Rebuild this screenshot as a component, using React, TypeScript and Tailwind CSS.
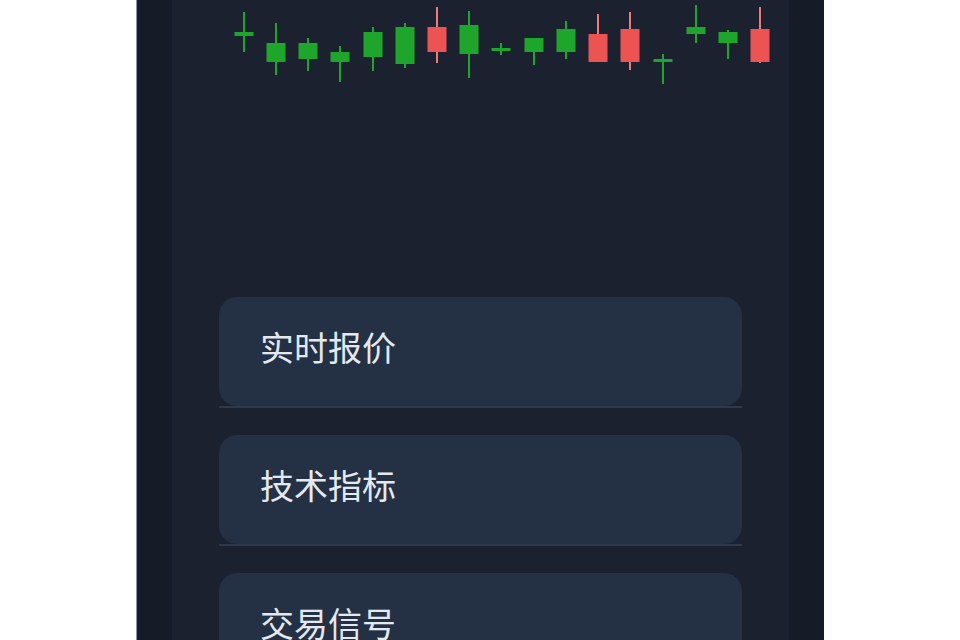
import React from 'react';

type Candle = {
  x: number; // wick x (page coords)
  hi: number;
  lo: number;
  top: number;
  bot: number;
  up: boolean;
};

const candles: Candle[] = [
  { x: 245, hi: 12, lo: 52, top: 32, bot: 36, up: true },
  { x: 277, hi: 23, lo: 75, top: 43, bot: 62, up: true },
  { x: 309, hi: 38, lo: 71, top: 43, bot: 59, up: true },
  { x: 341, hi: 46, lo: 82, top: 52, bot: 62, up: true },
  { x: 374, hi: 27, lo: 71, top: 32, bot: 57, up: true },
  { x: 406, hi: 23, lo: 68, top: 27, bot: 64, up: true },
  { x: 438, hi: 7, lo: 63, top: 27, bot: 52, up: false },
  { x: 470, hi: 11, lo: 78, top: 25, bot: 54, up: true },
  { x: 502, hi: 43, lo: 55, top: 48, bot: 51, up: true },
  { x: 535, hi: 38, lo: 65, top: 38, bot: 52, up: true },
  { x: 567, hi: 21, lo: 59, top: 29, bot: 52, up: true },
  { x: 599, hi: 14, lo: 62, top: 34, bot: 62, up: false },
  { x: 631, hi: 12, lo: 70, top: 29, bot: 62, up: false },
  { x: 664, hi: 54, lo: 84, top: 59, bot: 61, up: true },
  { x: 697, hi: 5, lo: 43, top: 27, bot: 34, up: true },
  { x: 729, hi: 30, lo: 59, top: 32, bot: 43, up: true },
  { x: 761, hi: 7, lo: 63, top: 29, bot: 62, up: false },
];

const items = ['实时报价', '技术指标', '交易信号'];

function CandleChart() {
  // svg spans the inner panel, which starts at x=173
  const ox = 173;
  return (
    <svg width="615" height="100" viewBox="0 0 615 100" className="block shrink-0 w-[615px] h-[100px] max-w-none">
      {candles.map((c, i) => {
        const col = c.up ? '#1ea52c' : '#ec5454';
        const wick = c.up ? '#1ea52c' : '#f07a7a';
        const h = Math.max(c.bot - c.top, 3);
        return (
          <g key={i}>
            <rect x={c.x - ox - 1} y={c.hi} width={2} height={c.lo - c.hi} fill={wick} />
            <rect x={c.x - ox - 9.5} y={c.top} width={19} height={h} fill={col} />
          </g>
        );
      })}
    </svg>
  );
}

export default function App() {
  return (
    <div className="h-[640px] overflow-hidden bg-white flex justify-center">
      <div className="w-[688px] h-full bg-[#161c27] border-l border-[#8a93a6] px-[35px] flex">
        <div className="flex-1 h-full overflow-hidden bg-[#1b212e]">
          <CandleChart />
          <div className="flex flex-col gap-[27px] px-[47px] pt-[197px]">
            {items.map((label) => (
              <div key={label} className="shrink-0 border-b-2 border-[#2e394b]">
                <div className="h-[109px] rounded-[18px] bg-[#243044] pl-[41px] pt-[28px]">
                  <span
                    className="text-[34px] leading-[44px] text-[#e4e8ef]"
                    style={{ fontFamily: '"Noto Sans CJK SC", "Noto Sans", sans-serif' }}
                  >
                    {label}
                  </span>
                </div>
              </div>
            ))}
          </div>
        </div>
      </div>
    </div>
  );
}
